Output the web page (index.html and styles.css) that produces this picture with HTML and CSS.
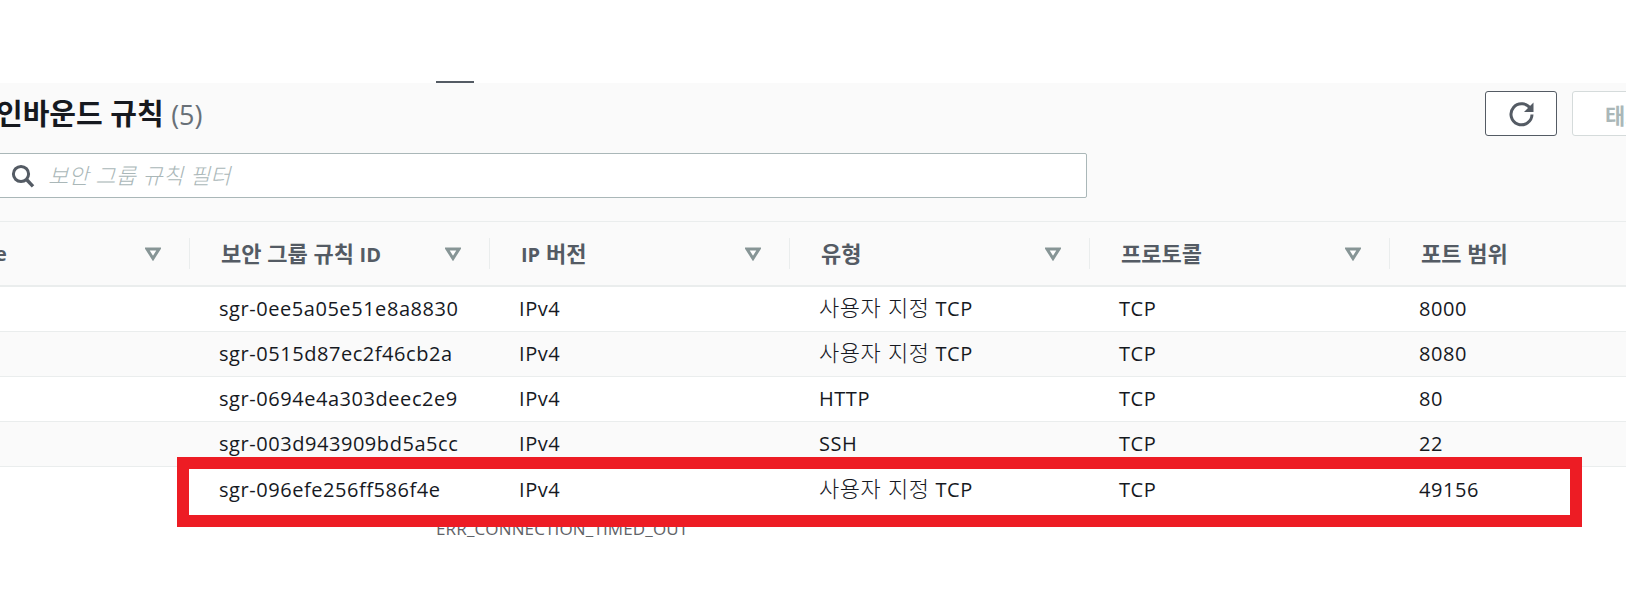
FILE: index.html
```html
<!DOCTYPE html>
<html lang="ko">
<head>
<meta charset="utf-8">
<title>인바운드 규칙</title>
<link rel="stylesheet" href="styles.css">
</head>
<body>
<div class="backdrop-line"></div>
<main class="panel">
  <header class="panel-head">
    <h2 class="title">인바운드 규칙 <span class="count">(5)</span></h2>
    <div class="actions">
      <button class="btn btn-icon" aria-label="새로 고침">
        <svg class="refresh" width="27" height="27" viewBox="0 0 27 27" fill="none"><path d="M22.6 8A10.5 10.5 0 1 0 24 13.5" stroke="#545b64" stroke-width="3"/><path d="M25.5 1.5V11H16z" fill="#545b64"/></svg>
      </button>
      <button class="btn btn-disabled">태그 관리</button>
    </div>
  </header>
  <div class="search">
    <svg width="24" height="24" viewBox="0 0 24 24" fill="none"><circle cx="10" cy="10" r="7.6" stroke="#545b64" stroke-width="3"/><path d="M15.5 15.5L22 22.4" stroke="#545b64" stroke-width="3.4"/></svg>
    <span class="placeholder">보안 그룹 규칙 필터</span>
  </div>
  <div class="table">
    <div class="grid head">
      <div class="th first"><div class="th-in"><span class="lat">Name</span><svg class="sort" width="16" height="14" viewBox="0 0 16 14"><path d="M2 2h12L8 11.5z" fill="#fff" stroke="#879596" stroke-width="3"/></svg></div></div>
      <div class="th"><div class="th-in sep"><span>보안 그룹 규칙 <span class="lat">ID</span></span><svg class="sort" width="16" height="14" viewBox="0 0 16 14"><path d="M2 2h12L8 11.5z" fill="#fff" stroke="#879596" stroke-width="3"/></svg></div></div>
      <div class="th"><div class="th-in sep"><span><span class="lat">IP</span> 버전</span><svg class="sort" width="16" height="14" viewBox="0 0 16 14"><path d="M2 2h12L8 11.5z" fill="#fff" stroke="#879596" stroke-width="3"/></svg></div></div>
      <div class="th"><div class="th-in sep"><span>유형</span><svg class="sort" width="16" height="14" viewBox="0 0 16 14"><path d="M2 2h12L8 11.5z" fill="#fff" stroke="#879596" stroke-width="3"/></svg></div></div>
      <div class="th"><div class="th-in sep"><span>프로토콜</span><svg class="sort" width="16" height="14" viewBox="0 0 16 14"><path d="M2 2h12L8 11.5z" fill="#fff" stroke="#879596" stroke-width="3"/></svg></div></div>
      <div class="th"><div class="th-in sep"><span>포트 범위</span></div></div>
    </div>
    <div class="grid row"><div></div><div>sgr-0ee5a05e51e8a8830</div><div>IPv4</div><div><span class="ko">사용자 지정</span> TCP</div><div>TCP</div><div>8000</div></div>
    <div class="grid row alt"><div></div><div>sgr-0515d87ec2f46cb2a</div><div>IPv4</div><div><span class="ko">사용자 지정</span> TCP</div><div>TCP</div><div>8080</div></div>
    <div class="grid row"><div></div><div>sgr-0694e4a303deec2e9</div><div>IPv4</div><div>HTTP</div><div>TCP</div><div>80</div></div>
    <div class="grid row alt"><div></div><div>sgr-003d943909bd5a5cc</div><div>IPv4</div><div>SSH</div><div>TCP</div><div>22</div></div>
    <div class="grid row last"><div></div><div>sgr-096efe256ff586f4e</div><div>IPv4</div><div><span class="ko">사용자 지정</span> TCP</div><div>TCP</div><div>49156</div></div>
  </div>
</main>
<div class="backdrop-error">ERR_CONNECTION_TIMED_OUT</div>
<div class="highlight"></div>
</body>
</html>
```

FILE: styles.css
```css
html, body {
  margin: 0;
  height: 589px;
  overflow: hidden;
  background: #fff;
}
body {
  position: relative;
  padding-top: 83px;
  box-sizing: border-box;
  font-family: "Open Sans", "Noto Sans CJK KR", sans-serif;
  color: #16191f;
}
.backdrop-line {
  position: absolute;
  left: 436px;
  top: 81px;
  width: 38px;
  height: 2px;
  background: #545b64;
}
.backdrop-error {
  position: absolute;
  left: 436px;
  top: 519px;
  font-size: 17px;
  line-height: 20px;
  letter-spacing: 0.15px;
  color: #5f6368;
}
.highlight {
  position: absolute;
  left: 177px;
  top: 457px;
  width: 1405px;
  height: 70px;
  box-sizing: border-box;
  border: 12px solid #ed1c24;
}
.panel {
  width: 1900px;
  margin-left: -100px;
  background: #fafafa;
}
.panel-head {
  display: flex;
  justify-content: space-between;
  height: 45px;
  padding: 8px 82px 0 96px;
}
.title {
  margin: 0;
  height: 45px;
  font-size: 29px;
  line-height: 45px;
  font-weight: 700;
  color: #16191f;
}
.count {
  font-size: 27px;
  font-weight: 400;
  color: #687078;
}
.actions {
  display: flex;
  gap: 15px;
}
.btn {
  height: 45px;
  padding: 0;
  background: #fff;
  border-radius: 3px;
  font: 700 22px "Noto Sans CJK KR", sans-serif;
}
.btn-icon {
  width: 72px;
  border: 1px solid #545b64;
  display: flex;
  align-items: center;
  justify-content: center;
}
.refresh {
  margin-top: 1px;
}
.btn-disabled {
  width: 146px;
  border: 1px solid #d5dbdb;
  color: #aab7b8;
  text-align: left;
  padding-left: 32px;
}
.search {
  display: flex;
  align-items: center;
  gap: 13px;
  box-sizing: border-box;
  width: 1187px;
  height: 45px;
  margin: 17px 0 0 0;
  padding-left: 110px;
  background: #fff;
  border: 1px solid #aab7b8;
  border-radius: 2px;
}
.placeholder {
  font-size: 22px;
  line-height: 30px;
  letter-spacing: 0.2px;
  font-style: italic;
  margin-bottom: 3px;
  color: #aab7b8;
  font-family: "Noto Sans CJK KR", sans-serif;
  font-weight: 300;
}
.table {
  margin-top: 23px;
  border-top: 1px solid #eaeded;
}
.grid {
  display: grid;
  grid-template-columns: 289px 300px 300px 300px 300px 1fr;
}
.head {
  height: 65px;
  box-sizing: border-box;
  align-items: center;
  border-bottom: 2px solid #eaeded;
  font-size: 22px;
  line-height: 31px;
  font-weight: 700;
  color: #545b64;
}
.lat {
  font-size: 20px;
}
.th-in {
  display: flex;
  align-items: center;
  justify-content: space-between;
  height: 31px;
  padding-right: 28px;
}
.first .th-in {
  padding-left: 47px;
}
.sep {
  border-left: 1px solid #eaeded;
  padding-left: 31px;
}
.row {
  height: 45px;
  box-sizing: border-box;
  align-items: center;
  background: #fff;
  border-bottom: 1px solid #eaeded;
  font-size: 20px;
  line-height: 28px;
  letter-spacing: 0.55px;
}
.row > div {
  padding-left: 30px;
}
.ko {
  font-family: "Noto Sans CJK KR", sans-serif;
  font-size: 22px;
  line-height: 1;
  font-weight: 300;
  letter-spacing: 0.55px;
}
.alt {
  background: #fafafa;
}
.last {
  border-bottom: 0;
}
```
